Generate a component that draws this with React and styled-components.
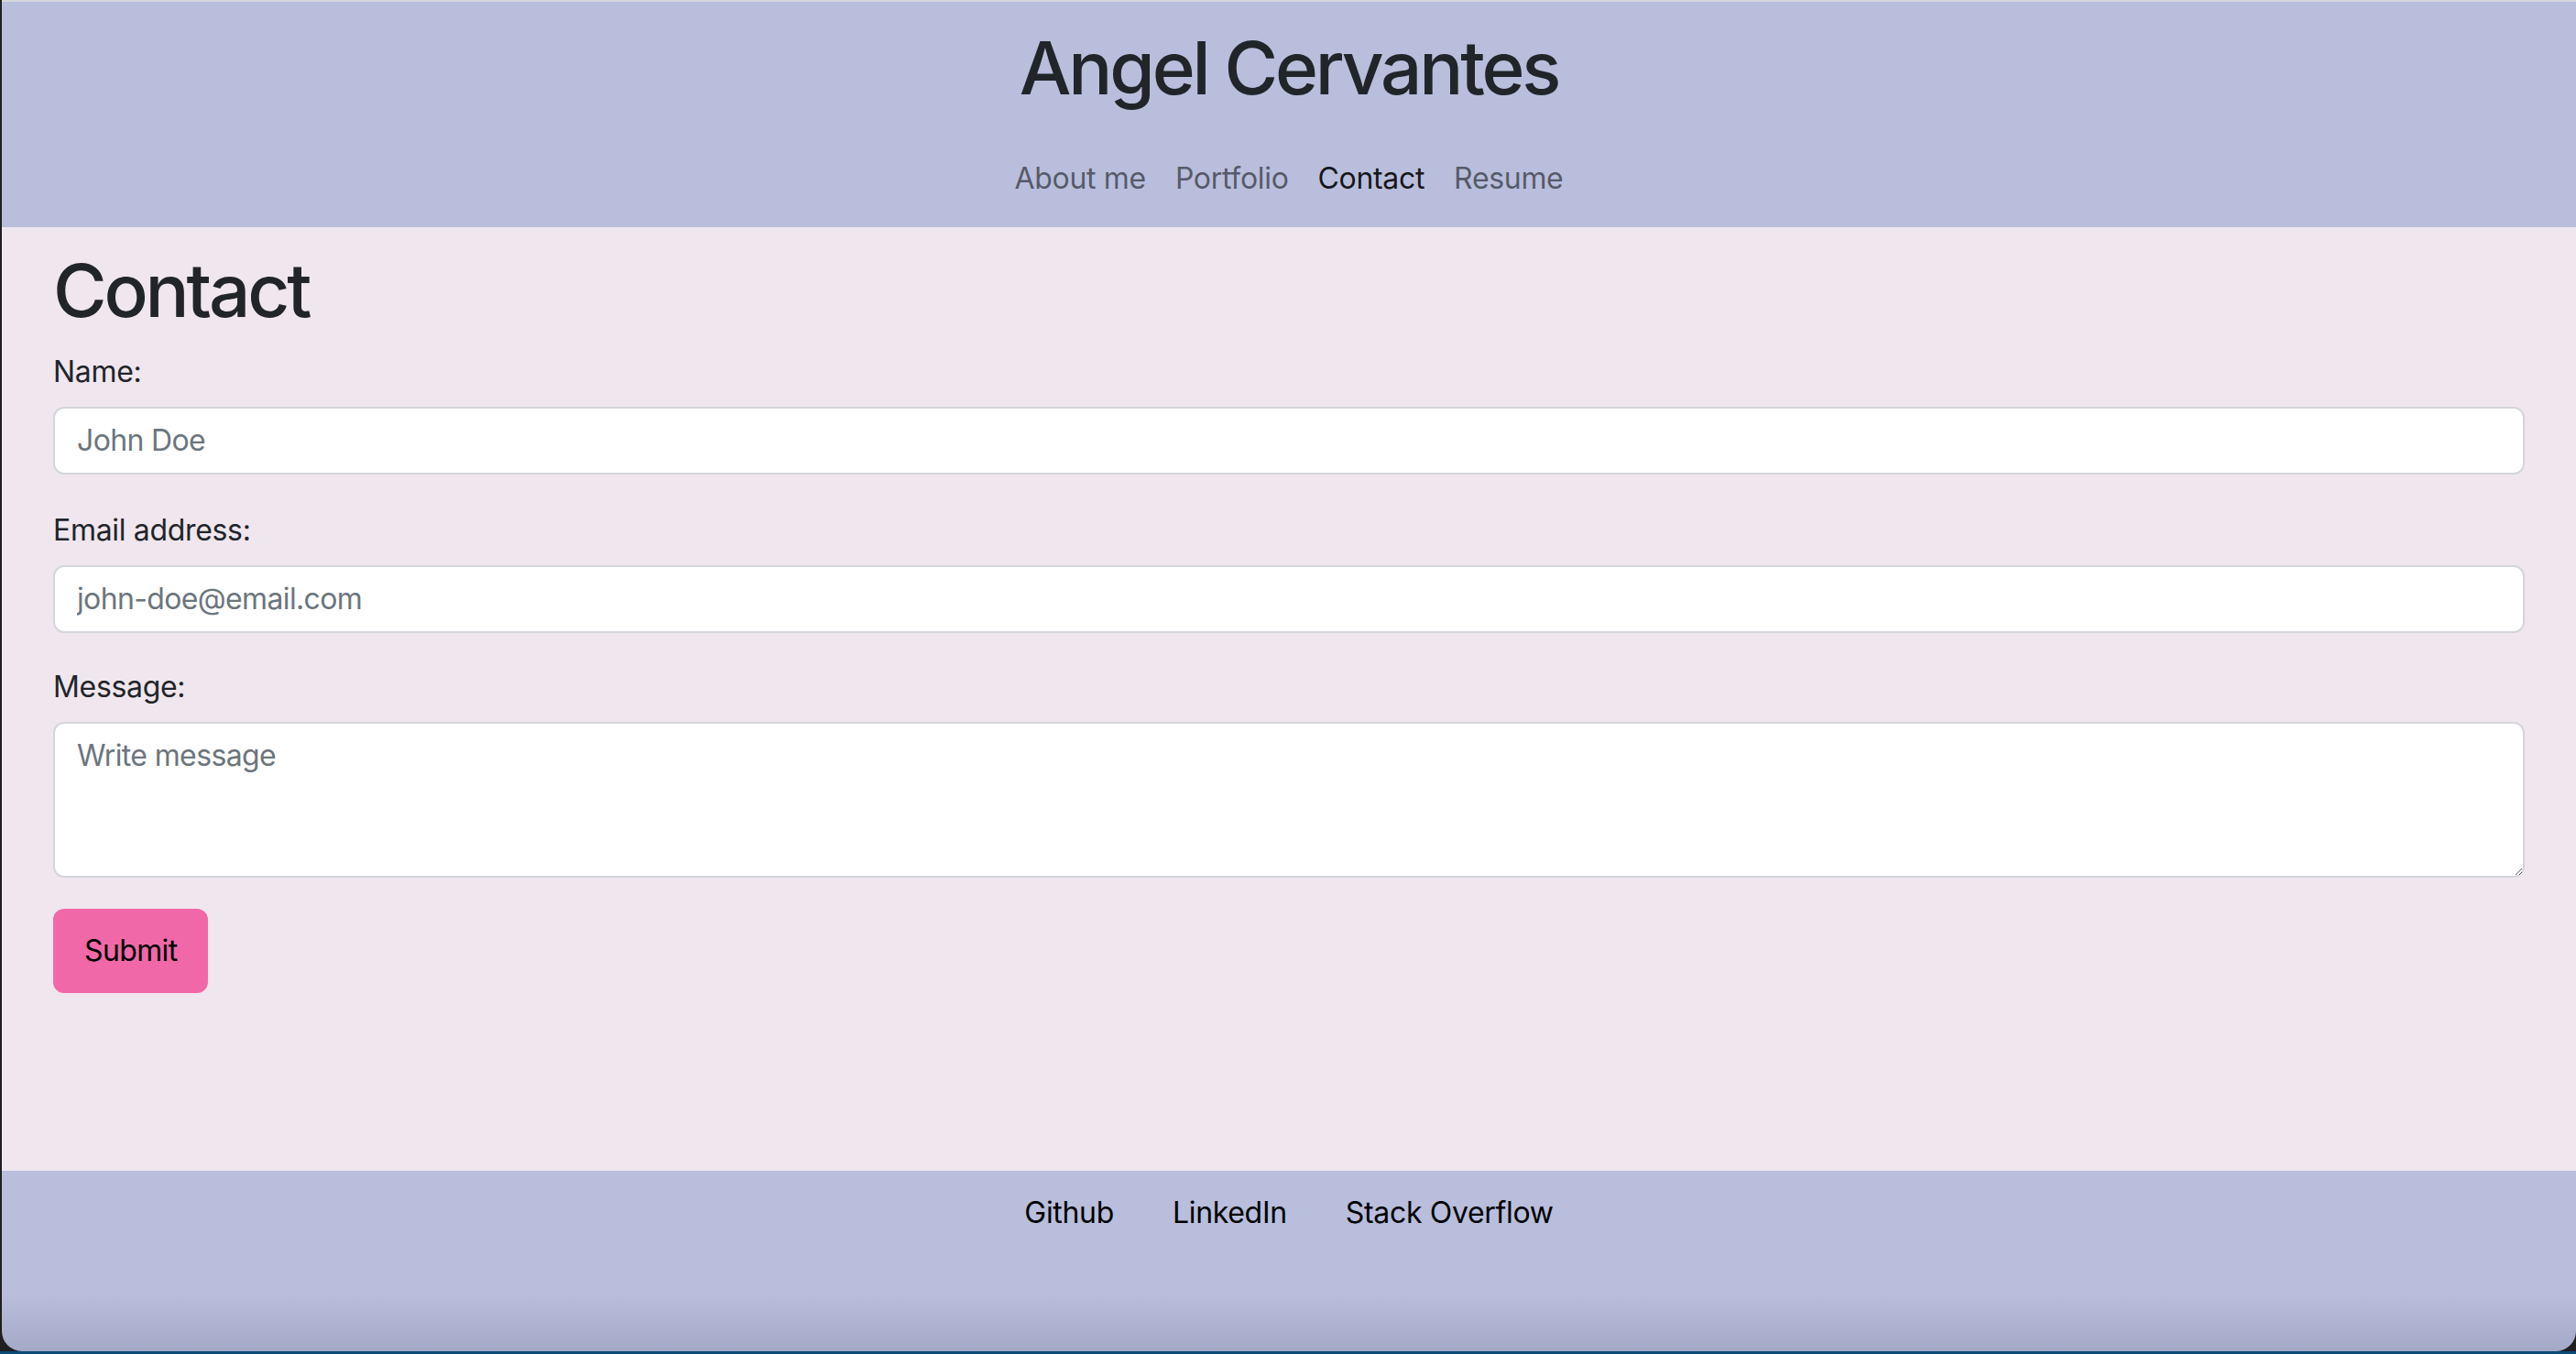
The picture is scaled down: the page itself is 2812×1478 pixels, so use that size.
import React from 'react';
import styled, { createGlobalStyle } from 'styled-components';

const GlobalStyle = createGlobalStyle`
    * {
        box-sizing: border-box;
    }
    body {
        margin: 0;
        background: #1f1f21;
        font-family: Inter, "Noto Sans", "Liberation Sans", sans-serif;
        color: #212529;
        letter-spacing: -0.02em;
    }
`;

const Screen = styled.div`
    height: 1478px;
    display: flex;
    flex-direction: column;
`;

const Window = styled.div`
    flex: 1;
    margin-left: 2px;
    display: flex;
    flex-direction: column;
    border-top: 2px solid #d6d7db;
    border-radius: 0 0 22px 22px;
    overflow: hidden;
`;

const DesktopStrip = styled.div`
    height: 3px;
    background: #0c4a78;
`;

const Header = styled.header`
    background-color: #b8bedc;
    padding: 24px 0 13px;
    display: flex;
    flex-direction: column;
    align-items: center;
`;

const Title = styled.h1`
    margin: 0;
    font-size: 80px;
    line-height: 96px;
    font-weight: 500;
    letter-spacing: -0.04em;
    color: #212529;
`;

const Nav = styled.nav`
    margin-top: 33px;
    display: flex;
`;

const NavLink = styled.a`
    padding: 16px;
    font-size: 32px;
    line-height: 48px;
    color: ${(props) => (props.active ? 'rgba(0, 0, 0, 0.9)' : 'rgba(0, 0, 0, 0.55)')};
    text-decoration: none;
`;

const Main = styled.main`
    flex: 1;
    background-color: #f0e6ee;
    padding: 21px 56px 0;
`;

const PageTitle = styled.h1`
    margin: 0 0 17px;
    font-size: 80px;
    line-height: 96px;
    font-weight: 500;
    letter-spacing: -0.04em;
`;

const Group = styled.div`
    margin-bottom: ${(props) => props.gap || '37px'};
`;

const Label = styled.label`
    display: block;
    margin-bottom: 14px;
    font-size: 32px;
    line-height: 48px;
`;

const Input = styled.input`
    display: block;
    width: 100%;
    padding: 11px 24px;
    font: inherit;
    font-size: 32px;
    line-height: 48px;
    letter-spacing: -0.02em;
    color: #212529;
    background: #fff;
    border: 2px solid #d3d6dc;
    border-radius: 12px;
    outline: none;
    &::placeholder {
        color: #6c757d;
    }
`;

const TextArea = styled(Input).attrs({ as: 'textarea' })`
    height: 170px;
    resize: vertical;
`;

const SubmitButton = styled.button`
    padding: 20px 32px;
    font: inherit;
    font-size: 32px;
    line-height: 48px;
    letter-spacing: -0.02em;
    color: #000;
    background-color: #f168a8;
    border: 2px solid #f168a8;
    border-radius: 12px;
`;

const Footer = styled.footer`
    height: 197px;
    padding-top: 6px;
    display: flex;
    justify-content: center;
    align-items: flex-start;
    background: linear-gradient(to bottom, #b8bedc 0%, #b8bedc 68%, #a3a9c6 100%);
`;

const FooterLink = styled.a`
    padding: 16px 32px;
    font-size: 32px;
    line-height: 48px;
    color: #000;
    text-decoration: none;
`;

const navItems = ['About me', 'Portfolio', 'Contact', 'Resume'];
const footerItems = ['Github', 'LinkedIn', 'Stack Overflow'];

const App = () => {
    return (
        <Screen>
            <GlobalStyle />
            <Window>
                <Header>
                    <Title>Angel Cervantes</Title>
                    <Nav>
                        {navItems.map((item) => (
                            <NavLink key={item} href="#" active={item === 'Contact' ? 1 : 0}>
                                {item}
                            </NavLink>
                        ))}
                    </Nav>
                </Header>
                <Main>
                    <PageTitle>Contact</PageTitle>
                    <form>
                        <Group>
                            <Label>Name:</Label>
                            <Input type="text" placeholder="John Doe" />
                        </Group>
                        <Group gap="35px">
                            <Label>Email address:</Label>
                            <Input type="email" placeholder="john-doe@email.com" />
                        </Group>
                        <Group gap="34px">
                            <Label>Message:</Label>
                            <TextArea rows={3} placeholder="Write message" />
                        </Group>
                        <SubmitButton type="button">Submit</SubmitButton>
                    </form>
                </Main>
                <Footer>
                    {footerItems.map((item) => (
                        <FooterLink key={item} href="#">
                            {item}
                        </FooterLink>
                    ))}
                </Footer>
            </Window>
            <DesktopStrip />
        </Screen>
    );
};

export default App;
